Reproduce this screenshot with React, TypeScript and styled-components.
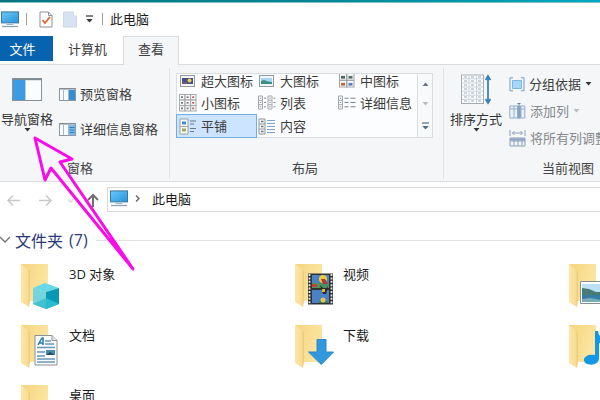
import React from 'react';
import styled, { createGlobalStyle } from 'styled-components';

const Global = createGlobalStyle`
  * { box-sizing: border-box; }
  body { margin: 0; background: #fff; overflow: hidden; }
`;

const Window = styled.main`
  position: relative;
  width: 600px;
  height: 400px;
  overflow: hidden;
  display: flex;
  flex-direction: column;
  background: #fff;
  color: #1c1c1c;
  font: 13px/18px "Noto Sans CJK SC", sans-serif;
  white-space: nowrap;
  svg { display: block; flex: none; }
`;

const Desktop = styled.div`
  flex: none;
  height: 3px;
  background: linear-gradient(90deg, #067580, #068493 50%, #00a9c2);
  border-bottom: 1px solid #83bfc6;
`;

const TitleBar = styled.header`
  flex: none;
  height: 33px;
  display: flex;
  align-items: center;
  padding: 0 0 1px 1px;
`;

const Divider = styled.i<{ $left: number; $right: number }>`
  width: 1px;
  height: 12px;
  margin: 0 ${p => p.$right}px 0 ${p => p.$left}px;
  background: #a0a0a0;
`;

const Push = styled.span<{ $left: number }>`
  margin-left: ${p => p.$left}px;
`;

const Tabs = styled.nav`
  flex: none;
  height: 29px;
  display: flex;
  align-items: flex-start;
  border-bottom: 1px solid #d9dbdd;
`;

const Tab = styled.div<{ $kind: 'file' | 'plain' | 'active' }>`
  width: ${p => (p.$kind === 'file' ? 53 : p.$kind === 'plain' ? 70 : 56)}px;
  height: ${p => (p.$kind === 'file' ? 25 : 29)}px;
  padding-top: ${p => (p.$kind === 'active' ? 3 : 4)}px;
  padding-right: ${p => (p.$kind === 'file' ? 8 : p.$kind === 'plain' ? 1 : 0)}px;
  text-align: center;
  color: ${p => (p.$kind === 'file' ? '#fff' : '#404040')};
  background: ${p => (p.$kind === 'file' ? '#0563b0' : p.$kind === 'active' ? '#f4f6f8' : 'transparent')};
  border: ${p => (p.$kind === 'active' ? '1px solid #d9dbdd' : '0')};
  border-bottom: 0;
`;

const Ribbon = styled.section`
  flex: none;
  height: 117px;
  display: flex;
  background: #f4f6f8;
  border-bottom: 1px solid #dadcde;
  color: #444;
`;

const Group = styled.div<{ $width: number }>`
  flex: none;
  width: ${p => p.$width}px;
  height: 111px;
  margin-top: 3px;
  display: flex;
  flex-direction: column;
  border-right: 1px solid #e1e3e5;
`;

const GroupBody = styled.div<{ $left?: number }>`
  height: 91px;
  display: flex;
  padding-left: ${p => p.$left ?? 0}px;
`;

const GroupLabel = styled.div<{ $left: number }>`
  padding-left: ${p => p.$left}px;
`;

const BigButton = styled.div<{ $top: number; $icon: number }>`
  flex: none;
  width: 54px;
  padding-top: ${p => p.$top}px;
  display: flex;
  flex-direction: column;
  align-items: center;
  color: #333;
  > svg:first-child { margin-bottom: ${p => p.$icon}px; }
`;

const Stack = styled.div<{ $top: number; $left: number; $gap: number }>`
  display: flex;
  flex-direction: column;
  gap: ${p => p.$gap}px;
  padding: ${p => p.$top}px 0 0 ${p => p.$left}px;
`;

const SmallButton = styled.div<{ $muted?: boolean }>`
  height: 18px;
  display: flex;
  align-items: center;
  gap: 4px;
  color: ${p => (p.$muted ? '#85888c' : '#3c3c3c')};
`;

const Gallery = styled.div`
  width: 257px;
  height: 65px;
  margin-top: 5px;
  display: flex;
  border: 1px solid #dadddf;
  background: #fcfdfe;
`;

const GalleryGrid = styled.div`
  width: 240px;
  height: 63px;
  display: grid;
  grid-template-columns: 79px 80px 80px;
  grid-template-rows: 17px 24px 22px;
  line-height: 14px;
`;

const GalleryItem = styled.div<{ $selected?: boolean }>`
  display: flex;
  align-items: center;
  gap: 4px;
  padding-left: 2px;
  color: #3c3c3c;
  background: ${p => (p.$selected ? '#cce4ff' : 'transparent')};
  outline: ${p => (p.$selected ? '1px solid #72aee4' : '0')};
  svg { width: 18px; }
  &:nth-child(-n + 3) { padding-bottom: 4px; }
`;

const Scroller = styled.div`
  flex: 1;
  border-left: 1px solid #dadddf;
  background: #f7f9fa;
  display: flex;
  flex-direction: column;
  align-items: center;
  padding-top: 8px;
  gap: 16px;
`;

const Navigation = styled.div`
  flex: none;
  height: 32px;
  margin-top: 5px;
  display: flex;
  align-items: flex-start;
  padding-left: 6px;
  > svg { margin-top: 6px; }
`;

const Address = styled.div`
  flex: 1;
  height: 25px;
  margin-left: 3px;
  display: flex;
  align-items: center;
  padding: 0 0 2px 2px;
  border: 1px solid #d9d9d9;
  border-right: 0;
`;

const Heading = styled.h1`
  flex: none;
  height: 22px;
  margin: 10px 0 0;
  display: flex;
  align-items: center;
  color: #283a7a;
  font-size: 16px;
  line-height: 22px;
  font-weight: 400;
  &::after { content: ''; flex: 1; height: 1px; margin-left: 8px; background: #e1e1e1; }
`;

const Count = styled.span`
  margin-left: 6px;
  font-family: "Open Sans", sans-serif;
  font-size: 16px;
`;

const Files = styled.section`
  flex: none;
  display: grid;
  grid-template-columns: repeat(3, 274px);
  grid-auto-rows: 60.5px;
  padding: 12px 0 0 20px;
`;

const FileItem = styled.div`
  display: flex;
  gap: 9px;
  line-height: 22px;
  font-family: "Open Sans", "Noto Sans CJK SC", sans-serif;
  svg { margin-top: 1px; }
`;

const Annotation = styled.svg`
  position: absolute;
  inset: 0;
  pointer-events: none;
`;

const Caret = ({ color = '#333', bar = false }: { color?: string; bar?: boolean }) => (
  <svg width="7" height={bar ? 8 : 4}>
    {bar && <path d="M0 1h7" stroke={color} strokeWidth="1.2" />}
    <path d={bar ? 'M0.3 4h6.4L3.5 7.5z' : 'M0.5 0h6L3.5 3.5z'} fill={color} />
  </svg>
);

const UpCaret = () => <svg width="7" height="4"><path d="M0.5 4h6L3.5 0.5z" fill="#657585" /></svg>;

const Monitor = ({ size = 18 }: { size?: number }) => (
  <svg width={size} height={size * 17 / 18} viewBox="0 0 18 17">
    <defs><linearGradient id="screen" x2="1" y2="1"><stop stopColor="#6cc9f8" /><stop offset="1" stopColor="#2493dc" /></linearGradient></defs>
    <rect x=".5" y=".9" width="17" height="11" fill="url(#screen)" stroke="#3d789f" />
    <path d="M6 13h6l1 1H5z" fill="#9cb4c3" /><path d="M1 15.5h16" stroke="#8ba3b1" strokeWidth="1.3" />
  </svg>
);

const CheckPage = () => (
  <svg width="14" height="17">
    <path d="M1 1h8.5l3.5 3.5V16H1z" fill="#fcfcfc" stroke="#8b929b" />
    <path d="M9.5 1v3.5H13" fill="none" stroke="#8b929b" />
    <path d="m3.5 9 2.4 3 5-6" fill="none" stroke="#dc6c38" strokeWidth="1.9" />
  </svg>
);

const BlankPage = () => (
  <svg width="14" height="17"><path d="M.5 1h10v4h3v11H.5z" fill="#d8e2f2" stroke="#ccd7e7" /></svg>
);

const NavPane = () => (
  <svg width="30" height="23">
    <rect x=".5" y=".5" width="29" height="22" fill="#fafcfe" stroke="#87919b" />
    <path d="M1 1.5h28" stroke="#7d8791" strokeWidth="1.4" />
    <path d="M1 2h12v20H1z" fill="#3c9be2" /><path d="M13.5 2v20" stroke="#bdcbd8" />
  </svg>
);

const SidePane = ({ lines = false }: { lines?: boolean }) => (
  <svg width="17" height="13">
    <rect x=".5" y=".5" width="16" height="12" fill="#fafcfe" stroke="#8998a5" />
    <path d="M1 1h15" stroke="#77848f" /><path d="M4.5 2v10M9.5 2v10" stroke="#a9b8c6" />
    <path d="M10 2h6v10h-6z" fill={lines ? '#79bbed' : '#328fd6'} />
    {lines && <path d="M10.5 4.5h5m-5 2.5h5m-5 2.5h5" stroke="#2c7fbd" />}
  </svg>
);

type IconKind = 'xl' | 'large' | 'medium' | 'small' | 'list' | 'details' | 'tiles' | 'content';

const cells = (columns: number, rows: number, step: number) =>
  Array.from({ length: columns * rows }, (_, i) => [(i % columns) * step, Math.floor(i / columns) * step]);

const ViewIcon = ({ kind }: { kind: IconKind }) => {
  if (kind === 'xl' || kind === 'large') return (
    <svg width="18" height="14">
      <rect x="1.5" y="1.5" width="14" height="11" fill="#f3f5f6" stroke="#9299a0" />
      <rect x="3" y="4" width="11" height="6" fill={kind === 'xl' ? '#4b4d88' : '#a8d8ef'} />
      {kind === 'xl'
        ? <><circle cx="10.5" cy="6.5" r="2" fill="#e3d646" /><path d="M3 8h5v2H3z" fill="#785678" /></>
        : <path d="M3 7 6 6l4 1.5L14 8v2H3z" fill="#3c8d84" />}
    </svg>
  );
  if (kind === 'medium') return (
    <svg width="18" height="14" viewBox="0 1 18 15" preserveAspectRatio="none" fill="#fcfcfc" stroke="#a1a4a7">
      {cells(2, 2, 7.5).map(([x, y], i) => (
        <g key={i} transform={`translate(${x} ${y})`}><rect x="1.5" y=".5" width="7" height="7" /><path d="M3 4.5h4" stroke={['#4a6b5a', '#5c736d', '#ce6428', '#597dc1'][i]} strokeWidth="3" /></g>
      ))}
    </svg>
  );
  if (kind === 'small') return (
    <svg width="18" height="18" fill="#fcfcfc" stroke="#a9a9ac">
      {cells(3, 3, 5.6).map(([x, y], i) => (
        <g key={i} transform={`translate(${x} ${y})`}><rect x=".5" y=".5" width="5.3" height="5.3" /><path d="M2 3.2h2" stroke={i % 3 === 2 ? '#b75657' : '#747d7c'} strokeWidth="1.7" /></g>
      ))}
    </svg>
  );
  if (kind === 'list') return (
    <svg width="18" height="16" fill="#fff" stroke="#a4a8ac">
      {[0, 9.5].map(x => <g key={x} transform={`translate(${x})`}><path d="M.5 1h4v13h-4zM.5 5.3h4M.5 9.7h4" /><path d="M6 3.2h2M6 7.5h2M6 11.8h2M1.8 3.2h1.4M1.8 7.5h1.4M1.8 11.8h1.4" stroke="#858c93" /></g>)}
    </svg>
  );
  if (kind === 'details') return (
    <svg width="18" height="16" fill="#fff" stroke="#a4a8ac">
      <path d="M.5 1h4v13h-4zM.5 5.3h4M.5 9.7h4" />
      <path d="M6.5 3.2h4m2 0h5M6.5 7.5h4m2 0h5M6.5 11.8h4m2 0h5M1.8 3.2h1.4M1.8 7.5h1.4M1.8 11.8h1.4" stroke="#7b8188" />
    </svg>
  );
  if (kind === 'tiles') return (
    <svg width="18" height="17" fill="#fcfcfc" stroke="#999fa3">
      <path d="M1 1h8v15H1zM1 8.5h8" />
      <path d="M3 5h4" stroke="#4b89ca" strokeWidth="3" /><path d="M3 12h4" stroke="#98a956" strokeWidth="3" />
      <path d="M11 3h6M11 6h4M11 10.5h6M11 13.5h4" stroke="#697987" />
    </svg>
  );
  return (
    <svg width="18" height="17" fill="#fcfcfc" stroke="#8d959c">
      <path d="M1 1h6v15H1zM1 6h6M1 11h6" /><path d="M3 3.5h2.5M3 8.5h2.5M3 13.5h2.5" stroke="#64716f" strokeWidth="1.5" />
      <path d="M9 2.5h8M9 5.5h8M9 8.5h8M9 11.5h8M9 14.5h8" stroke="#7aa4d2" />
    </svg>
  );
};

const SortIcon = () => (
  <svg width="30" height="31" fill="none">
    <rect x=".5" y="1" width="22" height="28.5" fill="#fff" stroke="#a4abb3" />
    <path d="M1 4.8h21M1 8.9h21M1 13h21M1 17.1h21M1 21.2h21M1 25.3h21M8 1v28M15.5 1v28" stroke="#c7d3dc" />
    <path d="M3 3h3m4 0h3m4 0h3M3 7h3m4 0h3m4 0h3M3 11h3m4 0h3m4 0h3M3 15h3m4 0h3m4 0h3M3 19h3m4 0h3m4 0h3M3 23h3m4 0h3m4 0h3M3 27h3m4 0h3m4 0h3" stroke="#9da8b0" />
    <path d="M27 3v25m-2.4-22L27 2l2.4 4m-4.8 19 2.4 4 2.4-4" stroke="#3a82bd" strokeWidth="1.8" />
  </svg>
);

const GroupByIcon = () => (
  <svg width="16" height="15"><path d="M4 .8H1v13h3m8-13h3v13h-3" fill="none" stroke="#6c9bc4" /><path d="M3.5 3.5h9v8h-9z" fill="#a5d5f8" stroke="#79b7e5" /></svg>
);

const AddColumnIcon = () => (
  <svg width="17" height="18" fill="#edf3fb" stroke="#93abc9"><path d="M.8 4h15v12H.8zM.8 7h15M5 4v12m7-12v12" /><path d="M8.5 4v12h3V4z" fill="#86a1c4" /><path d="m8 1 4 0-2 2z" fill="#637e9e" stroke="none" /></svg>
);

const FitColumnsIcon = () => (
  <svg width="17" height="18" fill="none" stroke="#8ca1bd"><path d="M1 1v6m15-6v6M3.5 4h10m-8-2-2 2 2 2m6-4 2 2-2 2M1 9h15v8H1zM1 12h15M5 9v8m4-8v8m4-8v8" /><path d="M1 10.5h15" strokeWidth="2" /></svg>
);

type FolderKind = '3d' | 'video' | 'pictures' | 'documents' | 'downloads' | 'music' | 'desktop';

const Folder = ({ kind }: { kind: FolderKind }) => (
  <svg width="40" height="49" viewBox="0 0 40 49">
    <defs>
      <linearGradient id="folder" x1="0" x2="1" y1="0" y2=".4"><stop stopColor="#f4d57e" /><stop offset="1" stopColor="#fde5a2" /></linearGradient>
      <linearGradient id="flap"><stop stopColor="#fce7a9" /><stop offset=".75" stopColor="#f8dc93" /><stop offset="1" stopColor="#e9c878" /></linearGradient>
    </defs>
    <path d="M1 0h27v37H9L1 4z" fill="url(#folder)" />
    <path d="m1 0 9 7v30l-1 6-8-5z" fill="url(#flap)" />
    {kind === '3d' && <g><path d="m13 24 12-5 14 5-13 4z" fill="#66d9e8" /><path d="m13 24 13 4v17l-13-5z" fill="#76d4df" /><path d="m26 28 13-4v16l-13 5z" fill="#0799b6" /><path d="m13 40 13-6v11z" fill="#43bfd0" /><path d="m26 34 13 6-13 5z" fill="#2bbbd0" /></g>}
    {kind === 'documents' && <g><path d="M15 10.5h17l5 5V40H15z" fill="#fcfcfd" stroke="#8b9197" /><path d="M32 10.5v5h5" fill="#e6e8e9" stroke="#8b9197" /><path d="m18 20 4-7h1v7m-4-2h4" fill="none" stroke="#287cad" strokeWidth="1.5" /><path d="M25 16h6m-6 3h9M17 22.5h18M17 27h8m-8 4h8m-8 3h18m-18 3h18" stroke="#6599b9" strokeWidth="1.3" /><path d="M26 25h9v5h-9z" fill="#488bad" /><path d="m26 30 4-3 5 3z" fill="#254e68" /></g>}
    {kind === 'video' && <g><path d="M14 9.5h25v31H14z" fill="#303335" /><path d="M15.5 10v30M37.5 10v30" stroke="#e7e8e3" strokeWidth="1.8" strokeDasharray="2 1.4" /><path d="M18 11h17v13H18zM18 26h17v13H18z" fill="#4b82c6" /><path d="M18 19h7l3-3 3 4h4v4H18z" fill="#4b9265" /><path d="M18 20h5v3h-5z" fill="#c84234" /><circle cx="29" cy="15" r="4" fill="#edcb3e" /><path d="M27 15h4l3 5h-5z" fill="#b23b32" /><path d="m26 21 5 5 3-4-2 8h-3z" fill="#27292a" /><path d="M28 25h3v3h-3z" fill="#ddbb37" /><path d="m24 39 5-4 6 4z" fill="#3b7a50" /><circle cx="29" cy="36" r="2.5" fill="#e5c848" /></g>}
    {kind === 'downloads' && <path d="M18 14.5h9V27h7.5L22.3 39.5 9.5 27H18z" fill="#3298de" stroke="#2886ca" transform="translate(5)" />}
    {kind === 'pictures' && <g><path d="M12.5 17.5H40v22H12.5z" fill="#fff" stroke="#858e96" /><path d="M14 20h25v18H14z" fill="#bbdff5" /><path d="m14 24 7 1 7 3h11v4H14z" fill="#477b73" /><path d="M14 31h25v7H14z" fill="#357ca6" /><path d="m14 35 8-1 17 3v1H14z" fill="#79aeb6" /></g>}
    {kind === 'music' && <path d="M27 6h3q1 7 8 10v7q-4-5-7-5v15c0 9-15 8-15 2 0-4 5-6 11-5z" fill="#1297e6" />}
  </svg>
);

const views: { kind: IconKind; text: string }[] = [
  { kind: 'xl', text: '超大图标' }, { kind: 'large', text: '大图标' }, { kind: 'medium', text: '中图标' },
  { kind: 'small', text: '小图标' }, { kind: 'list', text: '列表' }, { kind: 'details', text: '详细信息' },
  { kind: 'tiles', text: '平铺' }, { kind: 'content', text: '内容' },
];

const files: { kind: FolderKind; text: string }[] = [
  { kind: '3d', text: '3D 对象' }, { kind: 'video', text: '视频' }, { kind: 'pictures', text: '' },
  { kind: 'documents', text: '文档' }, { kind: 'downloads', text: '下载' }, { kind: 'music', text: '' },
  { kind: 'desktop', text: '桌面' },
];

export default function App() {
  return (
    <Window>
      <Global />
      <Desktop />
      <TitleBar>
        <Monitor />
        <Divider $left={7} $right={12} />
        <CheckPage />
        <Push $left={10}><BlankPage /></Push>
        <Push $left={9}><Caret bar /></Push>
        <Divider $left={9} $right={7} />
        <span>此电脑</span>
      </TitleBar>
      <Tabs>
        <Tab $kind="file">文件</Tab>
        <Tab $kind="plain">计算机</Tab>
        <Tab $kind="active">查看</Tab>
      </Tabs>
      <Ribbon>
        <Group $width={170}>
          <GroupBody>
            <BigButton $top={10} $icon={9}>
              <NavPane />
              <span>导航窗格</span>
              <Caret />
            </BigButton>
            <Stack $top={17} $left={5} $gap={17}>
              <SmallButton><SidePane />预览窗格</SmallButton>
              <SmallButton><SidePane lines />详细信息窗格</SmallButton>
            </Stack>
          </GroupBody>
          <GroupLabel $left={67}>窗格</GroupLabel>
        </Group>
        <Group $width={274}>
          <GroupBody $left={6}>
            <Gallery>
              <GalleryGrid>
                {views.map(v => (
                  <GalleryItem key={v.kind} $selected={v.kind === 'tiles'}>
                    <ViewIcon kind={v.kind} />{v.text}
                  </GalleryItem>
                ))}
              </GalleryGrid>
              <Scroller><UpCaret /><Caret color="#b7bdc3" /><Caret color="#526b82" bar /></Scroller>
            </Gallery>
          </GroupBody>
          <GroupLabel $left={122}>布局</GroupLabel>
        </Group>
        <Group $width={220}>
          <GroupBody $left={5}>
            <BigButton $top={6} $icon={5}>
              <SortIcon />
              <span>排序方式</span>
              <Caret />
            </BigButton>
            <Stack $top={7} $left={6} $gap={9}>
              <SmallButton><GroupByIcon />分组依据<Caret /></SmallButton>
              <SmallButton $muted><AddColumnIcon />添加列<Caret color="#bbb" /></SmallButton>
              <SmallButton $muted><FitColumnsIcon />将所有列调整为合适的大小</SmallButton>
            </Stack>
          </GroupBody>
          <GroupLabel $left={98}>当前视图</GroupLabel>
        </Group>
      </Ribbon>
      <Navigation>
        <svg width="98" height="15" fill="none" strokeWidth="1.5">
          <path d="M14 7.5H2m5-5-5 5 5 5M33 7.5h12m-5-5 5 5-5 5" stroke="#c9c9c9" />
          <path d="m62 6.5 2.5 2.5L67 6.5" stroke="#ddd" />
          <path d="M87 14V2m-5 5 5-5 5 5" stroke="#6f6f6f" strokeWidth="2" />
        </svg>
        <Address>
          <Monitor />
          <Push $left={7}><svg width="7" height="9"><path d="m1 1.5 3 3-3 3" fill="none" stroke="#666" strokeWidth="1.4" /></svg></Push>
          <Push $left={10}>此电脑</Push>
        </Address>
      </Navigation>
      <Heading>
        <svg width="15" height="10"><path d="m0 2 5 5 5-5" fill="none" stroke="#747474" strokeWidth="1.3" /></svg>
        文件夹<Count>(7)</Count>
      </Heading>
      <Files>
        {files.map(f => <FileItem key={f.kind}><Folder kind={f.kind} />{f.text}</FileItem>)}
      </Files>
      <Annotation width="600" height="400">
        <path d="M133 269 51 168l-6 12-10-42 37 21-12 3z" fill="none" stroke="#fa0be8" strokeWidth="3" strokeLinejoin="round" />
      </Annotation>
    </Window>
  );
}
